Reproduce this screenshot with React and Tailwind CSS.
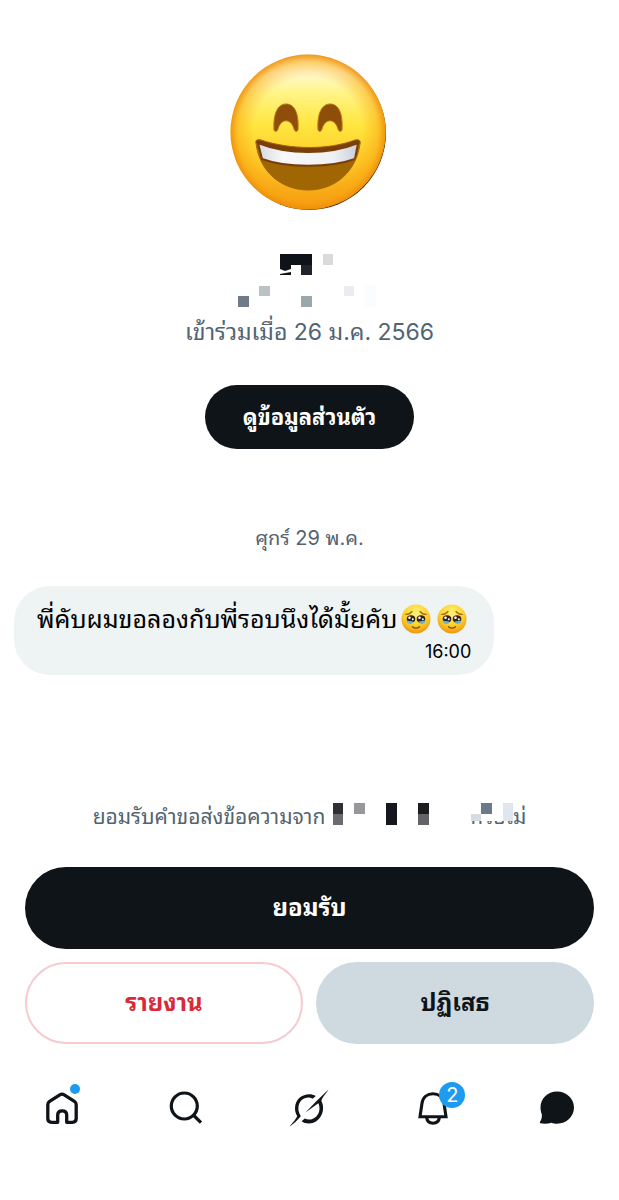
import React from "react";

const headerBlocks = [
    { x: 0, y: 42, w: 11, h: 11, fill: "#707b88" },
    { x: 21, y: 32, w: 11, h: 10, fill: "#b9c3c6" },
    { x: 63, y: 42, w: 11, h: 11, fill: "#9aa7ad" },
    { x: 85, y: 0, w: 10, h: 11, fill: "#dbdbde" },
    { x: 106, y: 32, w: 10, h: 10, fill: "#ececf0" },
    { x: 127, y: 32, w: 11, h: 21, fill: "#fafdff" },
];

const nameBlocks = [
    { x: 0, y: 0, w: 10, h: 11, fill: "#2f2f35" },
    { x: 0, y: 11, w: 10, h: 11, fill: "#6c6c70" },
    { x: 21, y: 0, w: 11, h: 11, fill: "#97979c" },
    { x: 53, y: 0, w: 11, h: 22, fill: "#16171c" },
    { x: 85, y: 0, w: 11, h: 11, fill: "#1b1b20" },
    { x: 85, y: 11, w: 11, h: 11, fill: "#646468" },
    { x: 134, y: 0, w: 46, h: 18, fill: "#ffffff" },
    { x: 138, y: 11, w: 10, h: 7, fill: "#d5dbe1" },
    { x: 148, y: 0, w: 11, h: 11, fill: "#6c7986" },
    { x: 170, y: 0, w: 10, h: 18, fill: "#e0e6ee" },
];

const Blocks = ({ items }) =>
    items.map((b, i) => <rect key={i} x={b.x} y={b.y} width={b.w} height={b.h} fill={b.fill} />);

const GrinningFace = () => (
    <svg viewBox="0 0 160 160" className="size-40" role="img" aria-label="Profile picture">
        <defs>
            <linearGradient id="face" x1="0" y1="0" x2="0" y2="1">
                <stop offset="0" stopColor="#fff6b0" />
                <stop offset="0.12" stopColor="#fffad0" />
                <stop offset="0.25" stopColor="#fff486" />
                <stop offset="0.45" stopColor="#ffe640" />
                <stop offset="0.7" stopColor="#fdc926" />
                <stop offset="1" stopColor="#f39a10" />
            </linearGradient>
            <radialGradient id="rim" cx="0.5" cy="0.5" r="0.5">
                <stop offset="0.7" stopColor="#f9a010" stopOpacity="0" />
                <stop offset="0.9" stopColor="#f9a010" stopOpacity="0.45" />
                <stop offset="1" stopColor="#ee8c0a" stopOpacity="0.9" />
            </radialGradient>
            <linearGradient id="teeth" x1="0" y1="0" x2="1" y2="0">
                <stop offset="0" stopColor="#d5d9e0" />
                <stop offset="0.25" stopColor="#f8f8fa" />
                <stop offset="0.75" stopColor="#f0f1f5" />
                <stop offset="1" stopColor="#c9ced8" />
            </linearGradient>
            <clipPath id="mouth">
                <path d="M26 91 C25 88 28 87 31 88 C61 98 99 98 125 88 C129 87 131 89 130 92 C126 120 105 138 78 138 C51 138 29 119 26 91Z" />
            </clipPath>
        </defs>
        <circle cx="79" cy="81" r="77" fill="#4d2500" />
        <circle cx="78" cy="80" r="77.500" fill="url(#face)" />
        <circle cx="78" cy="80" r="77.500" fill="url(#rim)" />
        <g fill="#8f4d0a" stroke="#b9761a" strokeWidth="1">
            <path d="M44 78 C43 61 48 52 56 52 C65 52 69 62 68 78 C67 80 65 80 64 77 C61 66 51 66 48 77 C47 80 45 80 44 78Z" />
            <path d="M88 78 C87 61 92 52 100 52 C109 52 113 62 112 78 C111 80 109 80 108 77 C105 66 95 66 92 77 C91 80 89 80 88 78Z" />
        </g>
        <g clipPath="url(#mouth)">
            <rect x="20" y="80" width="120" height="65" fill="#a06604" />
            <path d="M28 91 C58 103 99 103 128 91 L125 107 C100 116 56 116 32 107Z" fill="url(#teeth)" stroke="#7a3f08" strokeWidth="2" />
            <path d="M26 89 C58 100 99 100 130 89" fill="none" stroke="#7a3f08" strokeWidth="4" />
        </g>
        <path
            d="M26 91 C25 88 28 87 31 88 C61 98 99 98 125 88 C129 87 131 89 130 92 C126 120 105 138 78 138 C51 138 29 119 26 91Z"
            fill="none"
            stroke="#a5660c"
            strokeWidth="1"
        />
    </svg>
);

const PleadingFace = () => (
    <svg viewBox="0 0 30 30" className="size-[30px] shrink-0" role="img" aria-label="🥹">
        <defs>
            <radialGradient id="plead" cx="0.5" cy="0.3" r="0.7">
                <stop offset="0" stopColor="#fff27a" />
                <stop offset="0.55" stopColor="#fdd530" />
                <stop offset="1" stopColor="#ee960f" />
            </radialGradient>
        </defs>
        <circle cx="15" cy="15" r="14.500" fill="url(#plead)" />
        <path d="M4.500 10.500 Q8.500 10.500 11 7.500 M25.500 10.500 Q21.500 10.500 19 7.500" fill="none" stroke="#a9691a" strokeWidth="1.200" strokeLinecap="round" />
        <ellipse cx="10" cy="15" rx="4.300" ry="3.700" fill="#33211b" />
        <ellipse cx="20" cy="15" rx="4.300" ry="3.700" fill="#33211b" />
        <path d="M5.300 16.500 Q9 16.800 12.500 17.500 Q11.500 20.300 8.700 19.800 Q5.800 19.300 5.300 16.500Z M24.700 16.500 Q21 16.800 17.500 17.500 Q18.500 20.300 21.300 19.800 Q24.200 19.300 24.700 16.500Z" fill="#5db4d8" />
        <g fill="#ffffff">
            <circle cx="8.500" cy="13.800" r="1.300" />
            <circle cx="11.800" cy="15.300" r="1" />
            <circle cx="18.500" cy="13.800" r="1.300" />
            <circle cx="21.800" cy="15.300" r="1" />
        </g>
        <path d="M11.500 22.800 Q15 25.500 18.500 22.800" fill="none" stroke="#8a4c08" strokeWidth="1.400" strokeLinecap="round" />
    </svg>
);

const HomeIcon = () => (
    <svg viewBox="0 0 36 36" className="size-9" fill="none" stroke="#0f1419" strokeWidth="3.300">
        <path d="M3.800 14.700 Q3.800 12.600 5.600 11.400 L15.800 4.900 Q18 3.500 20.200 4.900 L30.400 11.400 Q32.200 12.600 32.200 14.700 V28.500 Q32.200 32.300 28.400 32.300 H22.700 V25 Q22.700 20.800 18.200 20.800 Q13.700 20.800 13.700 25 V32.300 H7.600 Q3.800 32.300 3.800 28.500Z" strokeLinejoin="round" />
    </svg>
);

const SearchIcon = () => (
    <svg viewBox="0 0 36 36" className="size-9" fill="none" stroke="#0f1419" strokeWidth="3.200">
        <circle cx="16.300" cy="16" r="13" />
        <path d="M25.300 25 L33 32.700" />
    </svg>
);

const GrokIcon = () => (
    <svg viewBox="0 0 40 40" className="size-10" fill="#0f1419">
        <path d="M26.800 7.900 C19 3.500 6 8 6 20.500 C6 24 7.300 26.500 8.200 28 C7.500 30.500 3.500 35 .5 38.700 C4 36 9 32 11.800 28.200 C11.500 27 9.400 25 9.400 20.300 C9.400 11.500 18 7.500 23.600 10.700Z" />
        <path d="M39.500 1.500 C36 7 32.800 9.800 32.400 13 C37.500 23 30.500 35.500 20 35.500 C17 35.500 14.500 34.700 12.600 33.300 L15.800 30.600 C22.500 34 30.500 28.500 30.500 20.500 C30.500 18.500 30 16.500 29.300 15.200 L16.500 24.500 L27.300 13.300Z" />
    </svg>
);

const BellIcon = () => (
    <svg viewBox="0 0 36 36" className="size-9" fill="none" stroke="#0f1419" strokeWidth="3.100">
        <path d="M5 26.800 L7 13.300 C8 7 12.500 3.800 18 3.800 C23.500 3.800 28 7 29 13.300 L31 26.800Z" strokeLinejoin="miter" />
        <path d="M11.500 27 C12 31 14.500 33.200 18 33.200 C21.500 33.200 24 31 24.500 27" />
    </svg>
);

const MessageIcon = () => (
    <svg viewBox="0 0 36 36" className="size-9" fill="#0f1419">
        <path d="M18 1.500 C27.500 1.500 35 8.600 35 17.500 C35 26.500 27.500 33.700 18 33.700 C15.800 33.700 14.300 33.400 12.500 32.700 C9 33.900 5 34 1.500 33.300 C.6 33.100.7 32.200 1.200 31.500 C2.700 29.300 3.200 26.700 2.700 23.800 C1.900 22 1.500 19.800 1.500 17.500 C1.500 8.600 8.500 1.500 18 1.500Z" />
    </svg>
);

const navItems = [
    { label: "Home", href: "#home", Icon: HomeIcon, dot: true },
    { label: "Search", href: "#search", Icon: SearchIcon },
    { label: "Grok", href: "#grok", Icon: GrokIcon },
    { label: "Notifications", href: "#notifications", Icon: BellIcon, count: 2 },
    { label: "Messages", href: "#messages", Icon: MessageIcon },
];

const Profile = () => (
    <header className="flex flex-col items-center pt-[52px]">
        <GrinningFace />
        <svg viewBox="0 0 143 54" className="mt-[42px] h-[54px] w-[143px]" aria-hidden="true">
            <path d="M42 0 H74 V21 H63 V11 H53 V15 L47 17 L42 15Z M42 20 L53 18 V21 H42Z" fill="#10121a" />
            <rect x="63" y="11" width="11" height="10" fill="#22232a" />
            <Blocks items={headerBlocks} />
        </svg>
        <p className="mt-2 text-[23px] leading-8 text-[#536471]">เข้าร่วมเมื่อ 26 ม.ค. 2566</p>
        <button
            type="button"
            className="mt-[37px] h-16 rounded-full bg-[#0f1419] px-[38px] text-[22px] font-bold text-white"
        >
            ดูข้อมูลส่วนตัว
        </button>
    </header>
);

const RequestActions = () => (
    <section className="px-[25px] pt-[126px]">
        <div className="flex items-center justify-center text-[21px] leading-8 text-[#536471]">
            <span className="mr-2">ยอมรับคำขอส่งข้อความจาก</span>
            <span className="relative flex w-[193px] justify-end">
                หรือไม่
                <svg viewBox="0 0 193 22" className="absolute top-0.5 left-0 h-[22px] w-[193px]" aria-hidden="true">
                    <Blocks items={nameBlocks} />
                </svg>
            </span>
        </div>
        <div className="mt-[34px] grid grid-cols-2 gap-[13px] text-2xl font-bold">
            <button type="button" className="col-span-2 h-[82px] rounded-full bg-[#0f1419] text-white">
                ยอมรับ
            </button>
            <button type="button" className="h-[82px] rounded-full border-2 border-[#f6cad1] text-[#d9293a]">
                รายงาน
            </button>
            <button type="button" className="h-[82px] rounded-full bg-[#cfd9e0] text-[#0f1419]">
                ปฏิเสธ
            </button>
        </div>
    </section>
);

const App = () => (
    <main className="min-h-screen bg-white font-['Inter','Noto_Sans_Thai_Looped','Loma','Noto_Sans_Thai',sans-serif]">
        <Profile />

        <p className="mt-[73px] text-center text-xl leading-8 text-[#536471]">ศุกร์ 29 พ.ค.</p>

        {/* Message bubble */}
        <div className="mt-8 flex px-[14px]">
            <div className="flex flex-col rounded-[36px] bg-[#eef3f4] px-[23px] pt-3 pb-[11px] text-black">
                <p className="flex items-center text-[25px] leading-[42px]">
                    <span>พี่คับผมขอลองกับพี่รอบนึงได้มั้ยคับ</span>
                    <span className="mx-1 flex gap-[6px]">
                        <PleadingFace />
                        <PleadingFace />
                    </span>
                </p>
                <time className="self-end text-lg leading-6">16:00</time>
            </div>
        </div>

        <RequestActions />

        <nav className="mt-11 flex pb-[72px]">
            {navItems.map(({ label, href, Icon, dot, count }) => (
                <a key={label} href={href} aria-label={label} className="flex h-10 flex-1 items-center justify-center">
                    <span className="relative">
                        <Icon />
                        {dot && <span className="absolute -top-[6px] right-0 size-[10px] rounded-full bg-[#1d9bf0]" />}
                        {count && (
                            <span className="absolute -top-2 -right-[14px] flex size-[26px] items-center justify-center rounded-full bg-[#1d9bf0] text-xl text-white">
                                {count}
                            </span>
                        )}
                    </span>
                </a>
            ))}
        </nav>
    </main>
);

export default App;
